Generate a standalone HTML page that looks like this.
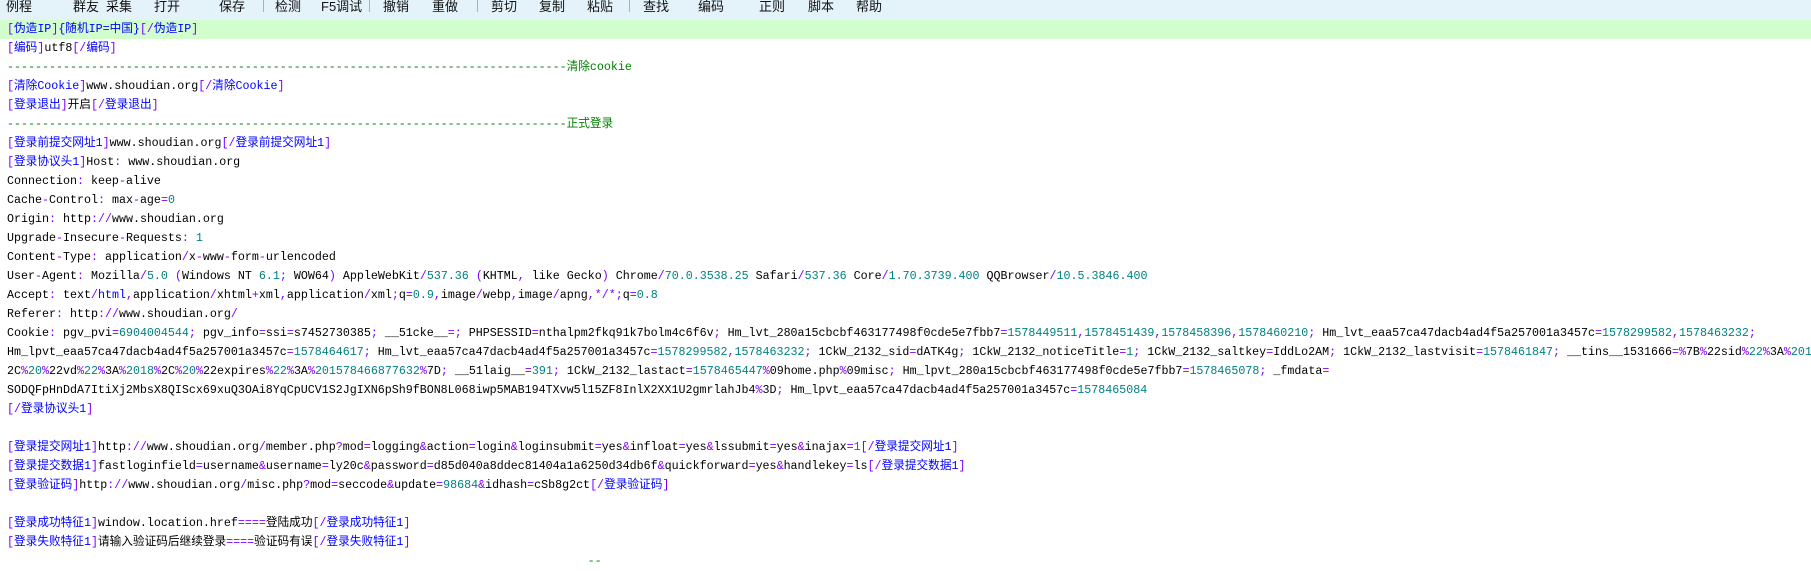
<!DOCTYPE html>
<html><head><meta charset="utf-8">
<style>
html,body{margin:0;padding:0;background:#fff;width:1811px;height:556px;overflow:hidden}
#tb{position:absolute;left:0;top:0;width:1811px;height:20px;background:#e4f2fa;font:13px "Liberation Sans","Noto Sans CJK SC",sans-serif;color:#111}
#tb span{position:absolute;top:-4px;white-space:nowrap}
#tb i{position:absolute;top:0;width:1px;height:12px;background:#8fb8d8}
#ed{position:absolute;left:0;top:20px;width:1811px;font:11.67px/19px "Liberation Mono","Noto Sans CJK SC",monospace;color:#000}
#ed div{height:19px;white-space:pre;padding-left:7px}
#ed div.g{background:#d2fdcc}
.p{color:#8000ff}.b{color:#0000ff}.n{color:#008080}.d{color:#008000}
</style></head><body>
<div id="tb">
<span style="left:6px">例程</span><span style="left:73px">群友</span><span style="left:106px">采集</span><span style="left:154px">打开</span><span style="left:219px">保存</span><i style="left:263px"></i><span style="left:275px">检测</span><span style="left:321px">F5调试</span><i style="left:369px"></i><span style="left:383px">撤销</span><span style="left:432px">重做</span><i style="left:477px"></i><span style="left:491px">剪切</span><span style="left:539px">复制</span><span style="left:587px">粘贴</span><i style="left:629px"></i><span style="left:643px">查找</span><span style="left:698px">编码</span><span style="left:759px">正则</span><span style="left:808px">脚本</span><span style="left:856px">帮助</span>
</div>
<div id="ed">
<div class="g">[伪造IP]{随机IP=中国}[/伪造IP]</div>
<div>[编码]utf8[/编码]</div>
<div class="x">--------------------------------------------------------------------------------清除cookie</div>
<div>[清除Cookie]www.shoudian.org[/清除Cookie]</div>
<div>[登录退出]开启[/登录退出]</div>
<div class="x">--------------------------------------------------------------------------------正式登录</div>
<div>[登录前提交网址1]www.shoudian.org[/登录前提交网址1]</div>
<div>[登录协议头1]Host: www.shoudian.org</div>
<div>Connection: keep-alive</div>
<div>Cache-Control: max-age=0</div>
<div>Origin: http://www.shoudian.org</div>
<div>Upgrade-Insecure-Requests: 1</div>
<div>Content-Type: application/x-www-form-urlencoded</div>
<div>User-Agent: Mozilla/5.0 (Windows NT 6.1; WOW64) AppleWebKit/537.36 (KHTML, like Gecko) Chrome/70.0.3538.25 Safari/537.36 Core/1.70.3739.400 QQBrowser/10.5.3846.400</div>
<div>Accept: text/html,application/xhtml+xml,application/xml;q=0.9,image/webp,image/apng,*/*;q=0.8</div>
<div>Referer: http://www.shoudian.org/</div>
<div>Cookie: pgv_pvi=6904004544; pgv_info=ssi=s7452730385; __51cke__=; PHPSESSID=nthalpm2fkq91k7bolm4c6f6v; Hm_lvt_280a15cbcbf463177498f0cde5e7fbb7=1578449511,1578451439,1578458396,1578460210; Hm_lvt_eaa57ca47dacb4ad4f5a257001a3457c=1578299582,1578463232;</div>
<div>Hm_lpvt_eaa57ca47dacb4ad4f5a257001a3457c=1578464617; Hm_lvt_eaa57ca47dacb4ad4f5a257001a3457c=1578299582,1578463232; 1CkW_2132_sid=dATK4g; 1CkW_2132_noticeTitle=1; 1CkW_2132_saltkey=IddLo2AM; 1CkW_2132_lastvisit=1578461847; __tins__1531666=%7B%22sid%22%3A%201</div>
<div>2C%20%22vd%22%3A%2018%2C%20%22expires%22%3A%201578466877632%7D; __51laig__=391; 1CkW_2132_lastact=1578465447%09home.php%09misc; Hm_lpvt_280a15cbcbf463177498f0cde5e7fbb7=1578465078; _fmdata=</div>
<div>SODQFpHnDdA7ItiXj2MbsX8QIScx69xuQ3OAi8YqCpUCV1S2JgIXN6pSh9fBON8L068iwp5MAB194TXvw5l15ZF8InlX2XX1U2gmrlahJb4%3D; Hm_lpvt_eaa57ca47dacb4ad4f5a257001a3457c=1578465084</div>
<div>[/登录协议头1]</div>
<div></div>
<div>[登录提交网址1]http://www.shoudian.org/member.php?mod=logging&amp;action=login&amp;loginsubmit=yes&amp;infloat=yes&amp;lssubmit=yes&amp;inajax=1[/登录提交网址1]</div>
<div>[登录提交数据1]fastloginfield=username&amp;username=ly20c&amp;password=d85d040a8ddec81404a1a6250d34db6f&amp;quickforward=yes&amp;handlekey=ls[/登录提交数据1]</div>
<div>[登录验证码]http://www.shoudian.org/misc.php?mod=seccode&amp;update=98684&amp;idhash=cSb8g2ct[/登录验证码]</div>
<div></div>
<div>[登录成功特征1]window.location.href====登陆成功[/登录成功特征1]</div>
<div>[登录失败特征1]请输入验证码后继续登录====验证码有误[/登录失败特征1]</div>
<div class="x">                                                                                   --</div>
</div>
<script>
function esc(s){return s.replace(/&/g,'&amp;').replace(/</g,'&lt;')}
function body(s){
  var o='';
  var re=/([A-Za-z0-9_.]+)|([=:\/;,&?%+*\-()])|([^A-Za-z0-9_.=:\/;,&?%+*\-()]+)/g,m;
  while((m=re.exec(s))){
    if(m[1]){
      if(/^[0-9][0-9.]*$/.test(m[1]))o+='<span class="n">'+m[1]+'</span>';
      else if(m[1]==='html'||m[1]==='sid')o+='<span class="b">'+m[1]+'</span>';
      else o+=m[1];
    }
    else if(m[2])o+='<span class="p">'+esc(m[2])+'</span>';
    else o+=esc(m[3]);
  }
  return o;
}
document.querySelectorAll('#ed div').forEach(function(d){
  var t=d.textContent;
  if(d.classList.contains('x')){d.innerHTML='<span class="d">'+esc(t)+'</span>';return;}
  var o='',re=/\[(\/?)([^\]]*)\]|\{([^}]*)\}/g,last=0,m;
  while((m=re.exec(t))){
    o+=body(t.slice(last,m.index));
    if(m[3]!==undefined)o+='<span class="b">{'+esc(m[3])+'}</span>';
    else o+='<span class="p">['+m[1]+'</span><span class="b">'+esc(m[2])+'</span><span class="p">]</span>';
    last=re.lastIndex;
  }
  o+=body(t.slice(last));
  d.innerHTML=o;
});
</script>
</body></html>
